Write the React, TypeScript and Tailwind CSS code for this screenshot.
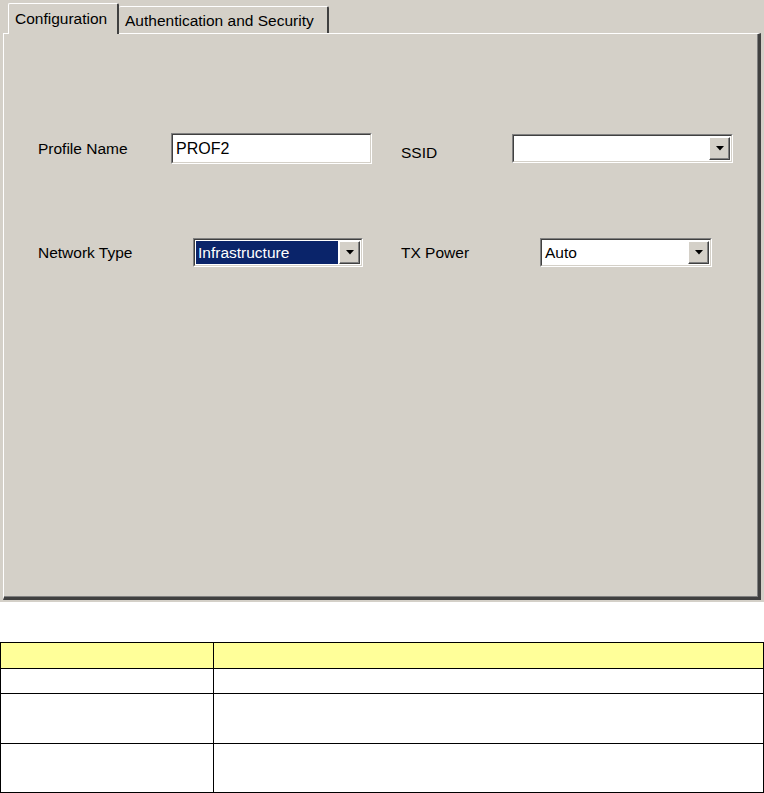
const font = { fontFamily: '"Liberation Sans", Arial, sans-serif' };

function DropArrow() {
  return (
    <span className="flex h-full w-[21px] shrink-0 items-center justify-center border border-t-white border-l-white border-r-[#404040] border-b-[#404040] bg-[#d4d0c8] shadow-[inset_-1px_-1px_0_#808080]">
      <svg width="8" height="5" viewBox="0 0 8 5">
        <path d="M0 0 H8 L4 4.5 Z" fill="#000" />
      </svg>
    </span>
  );
}

function Combo({ width, value, selected }: { width: string; value?: string; selected?: boolean }) {
  return (
    <div className={`flex h-[29px] ${width} border border-t-[#808080] border-l-[#808080] border-r-white border-b-white bg-white`}>
      <div className="flex min-w-0 flex-1 border border-t-[#404040] border-l-[#404040] border-r-[#d4d0c8] border-b-[#d4d0c8] p-[1px]">
        <div className={`mr-[1px] flex flex-1 items-center px-[2px] text-[15.5px] leading-none ${selected ? "bg-[#0a246a] text-white" : "text-black"}`}>
          {value}
        </div>
        <DropArrow />
      </div>
    </div>
  );
}

export default function App() {
  return (
    <div className="w-[764px] bg-white" style={font}>
      <div className="h-[602px] bg-[#d4d0c8] px-[3px] pb-[2px]">
        <div className="flex h-[33px] items-end pl-[5px]">
          <div className="relative z-10 -mb-px flex h-[31px] w-[111px] items-start rounded-t-[2px] border-l border-t border-r-2 border-l-white border-t-white border-r-[#404040] bg-[#d4d0c8] pl-[6px] pt-[7px] text-[15.5px] leading-none text-black">
            Configuration
          </div>
          <div className="flex h-[27px] w-[210px] items-start rounded-t-[2px] border-t border-r-2 border-t-white border-r-[#404040] bg-[#d4d0c8] pl-[6px] pt-[6px] text-[15.5px] leading-none text-black">
            Authentication and Security
          </div>
        </div>
        <div className="flex h-[567px] flex-col border-l border-t border-r-[3px] border-b-[3px] border-l-white border-t-white border-r-[#404040] border-b-[#404040] pl-[34px] pt-[99px] shadow-[inset_-1px_-1px_0_#808080]">
          <div className="flex items-center">
            <span className="w-[133px] text-[15.5px] text-black">Profile Name</span>
            <div className="flex h-[31px] w-[201px] border border-t-[#808080] border-l-[#808080] border-r-white border-b-white bg-white">
              <div className="flex flex-1 items-center border border-t-[#404040] border-l-[#404040] border-r-[#d4d0c8] border-b-[#d4d0c8] pl-[3px] text-[16px] text-black">
                PROF2
              </div>
            </div>
            <span className="ml-[29px] mt-[8px] w-[111px] text-[15.5px] text-black">SSID</span>
            <Combo width="w-[221px]" />
          </div>
          <div className="mt-[74px] flex items-center">
            <span className="w-[155px] text-[15.5px] text-black">Network Type</span>
            <Combo width="w-[170px]" value="Infrastructure" selected />
            <span className="ml-[38px] w-[139px] text-[15.5px] text-black">TX Power</span>
            <Combo width="w-[172px]" value="Auto" />
          </div>
        </div>
      </div>
      <table className="mt-[40px] w-[764px] border-collapse" style={font}>
        <tbody>
          <tr className="h-[26px] bg-[#ffff99]">
            <td className="w-[213px] border border-black"></td>
            <td className="border border-black"></td>
          </tr>
          <tr className="h-[25px]">
            <td className="border border-black"></td>
            <td className="border border-black"></td>
          </tr>
          <tr className="h-[50px]">
            <td className="border border-black"></td>
            <td className="border border-black"></td>
          </tr>
          <tr className="h-[49px]">
            <td className="border border-black"></td>
            <td className="border border-black"></td>
          </tr>
        </tbody>
      </table>
    </div>
  );
}
